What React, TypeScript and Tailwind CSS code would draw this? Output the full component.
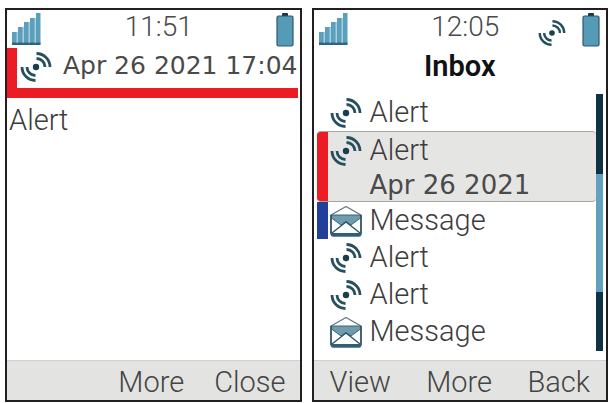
import React from "react";

const messages = [
  { type: "Alert", date: "", marker: "", selected: false },
  { type: "Alert", date: "Apr 26 2021", marker: "bg-[#ec1c24]", selected: true },
  { type: "Message", date: "", marker: "bg-[#21409a]", selected: false },
  { type: "Alert", date: "", marker: "", selected: false },
  { type: "Alert", date: "", marker: "", selected: false },
  { type: "Message", date: "", marker: "", selected: false },
];

function SignalIcon() {
  return (
    <svg className="w-[29px] h-8 shrink-0" viewBox="0 0 29 32">
      <g fill="#a9cfdf">
        <path d="M4 19h2v10H4zM10 14h2v15h-2zM16 9h2v20h-2zM22 5h3v24h-3z" />
      </g>
      <g fill="#5b9fbd">
        <path d="M0 19h4.500v12H0zM6 14h4.500v17H6zM12 9h4.500v22H12zM18 5h4.500v26H18zM24 0h4.500v31H24z" />
      </g>
      <path d="M0 29.500h28.500V32H0z" fill="#2f6580" />
    </svg>
  );
}

function BatteryIcon() {
  return (
    <svg className="w-[18px] h-[34px] shrink-0" viewBox="0 0 18 34">
      <rect x="6" y="0" width="6" height="4" rx="1" fill="#20333c" />
      <rect x="1" y="3" width="16" height="30" rx="1.5" fill="#559bb8" stroke="#2f596b" strokeWidth="1.2" />
    </svg>
  );
}

function AlertIcon({ className }: { className: string }) {
  return (
    <svg className={className} viewBox="0 0 32 32" fill="none" stroke="#27505f" strokeWidth="2.8">
      <circle cx="16" cy="16" r="3.2" fill="#173f50" stroke="none" />
      <path d="M16.500 2.500A13.500 13.500 0 0 1 30 16" />
      <path d="M16.500 7.500A8.500 8.500 0 0 1 25 16" />
      <path d="M15.500 29.500A13.500 13.500 0 0 1 2 16" />
      <path d="M15.500 24.500A8.500 8.500 0 0 1 7 16" />
    </svg>
  );
}

function MessageIcon() {
  return (
    <svg className="w-8 h-8 shrink-0" viewBox="0 0 32 32" strokeLinejoin="round">
      <path d="M1 10 16 1.5 31 10v19a2 2 0 0 1-2 2H3a2 2 0 0 1-2-2z" fill="#fff" stroke="#5b747f" strokeWidth="1.2" />
      <path d="M1.500 10h29v3L21 20l-5-3.500-5 3.500-9.500-7z" fill="#6f9bac" stroke="#3c6475" strokeWidth="1" />
      <path d="M2 28 16 17l14 11" fill="none" stroke="#2e5364" strokeWidth="1.4" />
      <path d="M1 10v19M31 10v19" stroke="#2e5364" strokeWidth="1.6" />
      <path d="M1 28h30v1.500a2 2 0 0 1-2 2H3a2 2 0 0 1-2-2z" fill="#2e5f76" />
    </svg>
  );
}

function StatusBar({ time, alert }: { time: string; alert?: boolean }) {
  return (
    <div className="grid grid-cols-[1fr_auto_1fr] items-start h-[38px] pl-[5px] pr-[6px] pt-[3px]">
      <SignalIcon />
      <span className="pl-3 text-[28px] leading-7 text-[#4a4a4a]">{time}</span>
      <div className="flex justify-end gap-4">
        {alert && <AlertIcon className="w-7 h-7 mt-[6px]" />}
        <BatteryIcon />
      </div>
    </div>
  );
}

function AlertScreen() {
  return (
    <section className="flex-1 min-w-0 flex flex-col bg-white border-2 border-[#231f20]">
      <StatusBar time="11:51" />
      <div className="flex items-start mr-[2px] h-[50px] pl-[3px] border-l-10 border-b-10 border-[#ec1c24]">
        <AlertIcon className="w-8 h-8 mt-[3px] shrink-0" />
        <span className="flex-1 text-right whitespace-nowrap text-[25px] leading-9 font-[DejaVu_Sans,sans-serif] font-normal text-[#4a4a4a]">
          Apr 26 2021 17:04
        </span>
      </div>
      <p className="flex-1 px-[2px] pt-1 text-[29px] leading-[37px] text-[#3c3c3c]">Alert</p>
      <footer className="flex justify-end gap-[30px] h-10 pr-[14px] bg-[#e3e3e2] border-t border-[#cfcfce] text-[29px] text-[#444]">
        <button type="button">More</button>
        <button type="button">Close</button>
      </footer>
    </section>
  );
}

function InboxScreen() {
  return (
    <section className="flex-1 min-w-0 flex flex-col bg-white border-2 border-[#231f20]">
      <StatusBar time="12:05" alert />
      <h1 className="text-center text-[29px] leading-9 font-semibold text-[#111]">Inbox</h1>
      <div className="flex flex-1 pt-[10px] px-[3px] pb-[9px]">
        <ul className="flex-1 min-w-0">
          {messages.map((m, i) => (
            <li
              key={i}
              className={`flex ${m.selected ? "bg-[#e5e5e4] border-y border-[#a5a5a3] rounded-sm overflow-hidden" : ""}`}
            >
              <div className={`w-[11px] mr-[2px] shrink-0 ${m.marker}`} />
              {m.type === "Alert" ? (
                <AlertIcon className="w-8 h-8 mt-[3px] shrink-0" />
              ) : (
                <div className="mt-[3px]"><MessageIcon /></div>
              )}
              <div className="pl-2 text-[#3c3c3c]">
                <div className="text-[29px] leading-[37px]">{m.type}</div>
                {m.date && (
                  <div className="text-[26px] leading-8 font-[DejaVu_Sans,sans-serif] font-normal text-[#4a4a4a]">
                    {m.date}
                  </div>
                )}
              </div>
            </li>
          ))}
        </ul>
        <div className="w-[7px] flex flex-col bg-[#0f3345]">
          <div className="flex-[80]" />
          <div className="flex-[118] bg-[#63a0bf]" />
          <div className="flex-[59]" />
        </div>
      </div>
      <footer className="flex justify-between h-10 px-4 bg-[#e3e3e2] border-t border-[#cfcfce] text-[29px] text-[#444]">
        <button type="button">View</button>
        <button type="button">More</button>
        <button type="button">Back</button>
      </footer>
    </section>
  );
}

export default function App() {
  return (
    <main className="flex gap-[10px] min-h-screen pt-2 pb-px pl-[5px] pr-1 bg-white font-[Roboto,sans-serif] font-light">
      <AlertScreen />
      <InboxScreen />
    </main>
  );
}
